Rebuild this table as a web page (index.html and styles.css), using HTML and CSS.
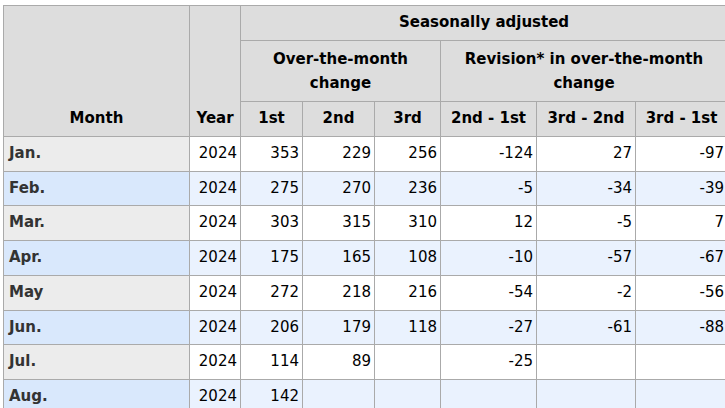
FILE: index.html
```html
<!DOCTYPE html>
<html>
<head>
<meta charset="utf-8">
<link rel="stylesheet" href="styles.css">
</head>
<body>
<div class="wrap">
<table class="data">
  <colgroup>
    <col class="c-month"><col class="c-year"><col class="c-1"><col class="c-2"><col class="c-3"><col class="c-r1"><col class="c-r2"><col class="c-r3">
  </colgroup>
  <thead>
    <tr class="h1">
      <th rowspan="3" class="bottom">Month</th>
      <th rowspan="3" class="bottom">Year</th>
      <th colspan="6">Seasonally adjusted</th>
    </tr>
    <tr class="h2">
      <th colspan="3">Over-the-month change</th>
      <th colspan="3">Revision* in over-the-month change</th>
    </tr>
    <tr class="h3">
      <th>1st</th><th>2nd</th><th>3rd</th><th>2nd - 1st</th><th>3rd - 2nd</th><th>3rd - 1st</th>
    </tr>
  </thead>
  <tbody>
    <tr><th>Jan.</th><td>2024</td><td>353</td><td>229</td><td>256</td><td>-124</td><td>27</td><td>-97</td></tr>
    <tr><th>Feb.</th><td>2024</td><td>275</td><td>270</td><td>236</td><td>-5</td><td>-34</td><td>-39</td></tr>
    <tr><th>Mar.</th><td>2024</td><td>303</td><td>315</td><td>310</td><td>12</td><td>-5</td><td>7</td></tr>
    <tr><th>Apr.</th><td>2024</td><td>175</td><td>165</td><td>108</td><td>-10</td><td>-57</td><td>-67</td></tr>
    <tr><th>May</th><td>2024</td><td>272</td><td>218</td><td>216</td><td>-54</td><td>-2</td><td>-56</td></tr>
    <tr><th>Jun.</th><td>2024</td><td>206</td><td>179</td><td>118</td><td>-27</td><td>-61</td><td>-88</td></tr>
    <tr><th>Jul.</th><td>2024</td><td>114</td><td>89</td><td></td><td>-25</td><td></td><td></td></tr>
    <tr><th>Aug.</th><td>2024</td><td>142</td><td></td><td></td><td></td><td></td><td></td></tr>
  </tbody>
</table>
</div>
</body>
</html>
```
FILE: styles.css
```css
html, body {
  margin: 0;
  padding: 0;
  overflow: hidden;
  background: #fff;
}
.wrap {
  padding: 5px 0 0 3px;
}
.data {
  border-collapse: collapse;
  table-layout: fixed;
  width: 725px;
  font-family: "DejaVu Sans", Verdana, sans-serif;
  font-size: 15px;
  line-height: 23.75px;
  color: #000;
}
.c-month { width: 186px; }
.c-year { width: 51px; }
.c-1 { width: 62px; }
.c-2 { width: 72px; }
.c-3 { width: 66px; }
.c-r1 { width: 96px; }
.c-r2 { width: 99px; }
.c-r3 { width: 92px; }
.data th, .data td {
  border: 1px solid #aaa;
  padding: 5px 4px;
  white-space: nowrap;
}
.data thead th {
  background: #dddddd;
  font-weight: bold;
  text-align: center;
  vertical-align: middle;
}
.data thead tr.h1 th { padding-top: 5px; padding-bottom: 5px; height: 24px; }
.data thead tr.h2 th { white-space: normal; padding-top: 6px; padding-bottom: 6px; line-height: 24px; }
.data thead tr.h3 th { height: 23px; }
.data thead th.bottom { vertical-align: bottom; }
.data tbody th {
  text-align: left;
  font-weight: bold;
  color: #333;
  background: #ececec;
  padding-left: 5px;
}
.data tbody td {
  text-align: right;
  padding-right: 3px;
  background: #fff;
}
.data tbody tr:nth-child(even) th { background: #d9e8fc; }
.data tbody tr:nth-child(even) td { background: #eaf2fe; }
```
